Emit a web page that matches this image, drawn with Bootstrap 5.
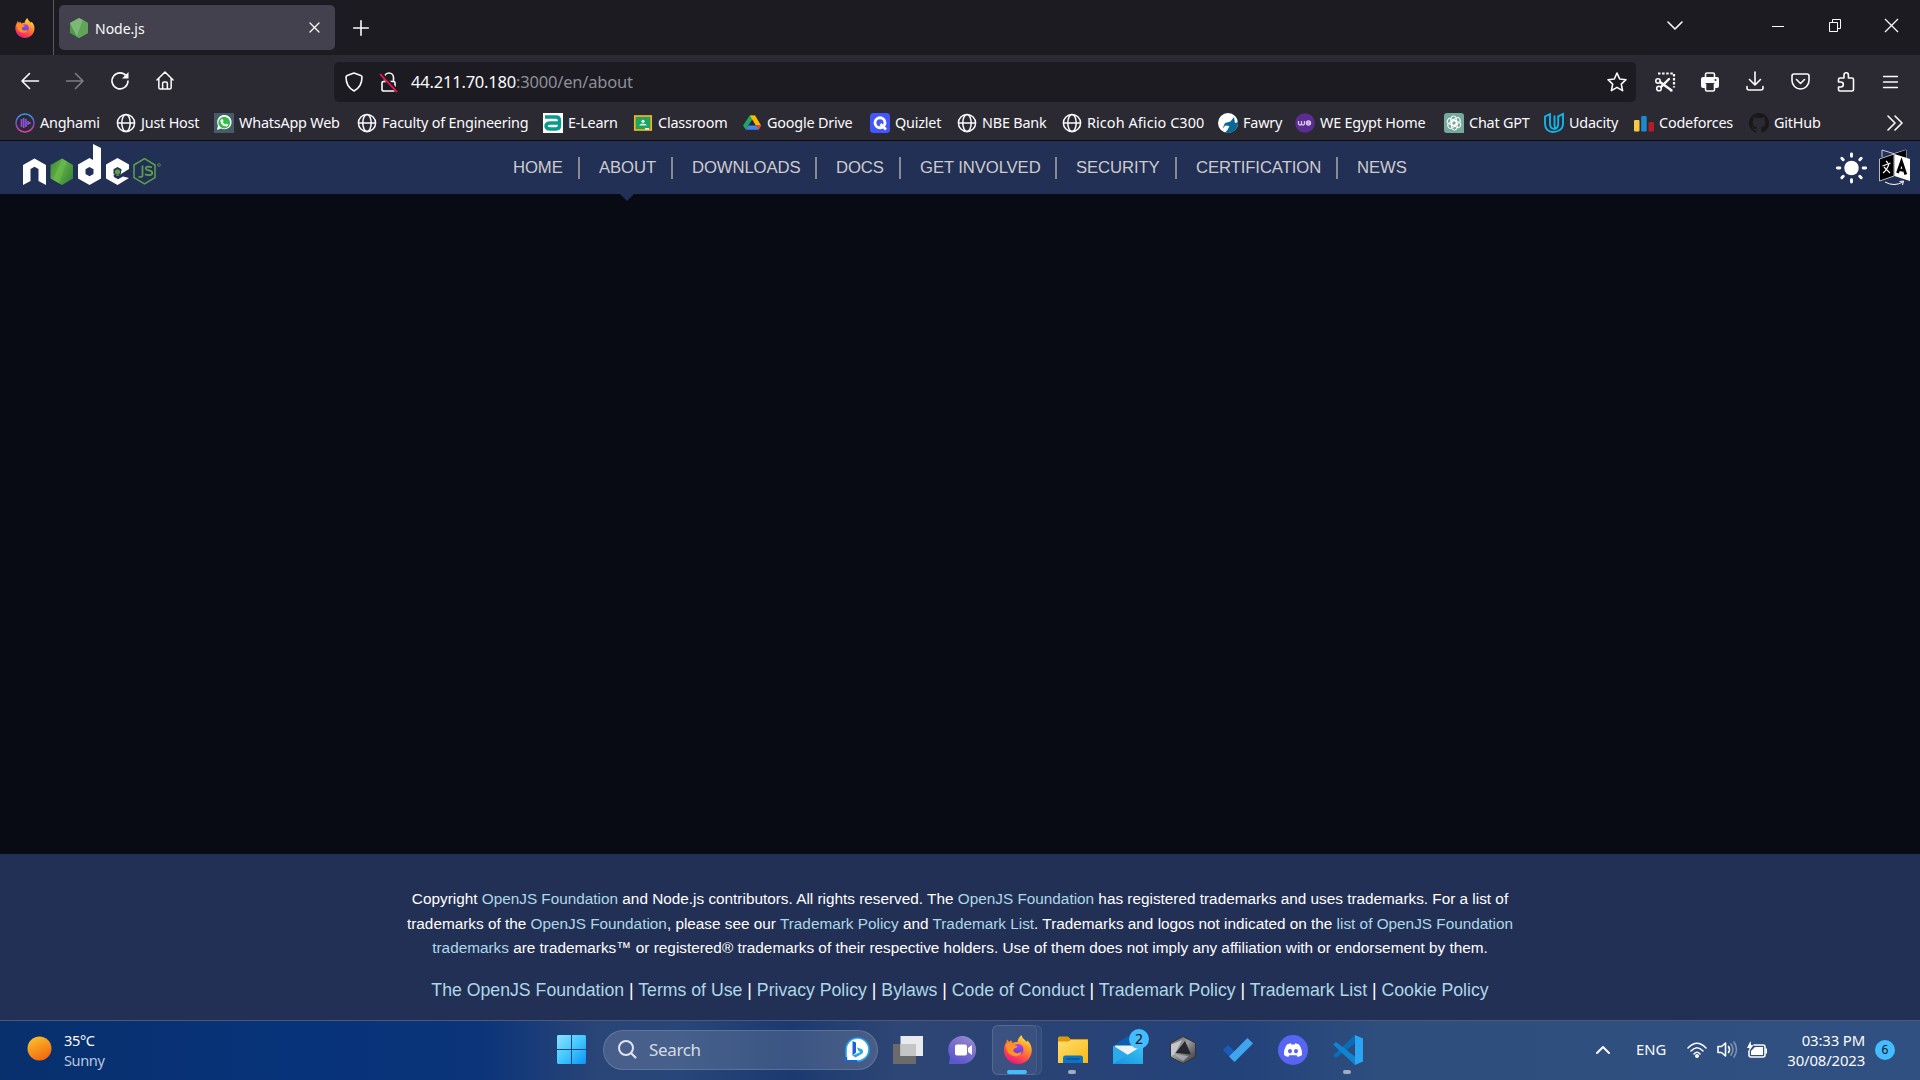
<!DOCTYPE html>
<html lang="en">
<head>
<meta charset="utf-8">
<title>Node.js</title>
<link rel="stylesheet" href="https://cdn.jsdelivr.net/npm/bootstrap@5.3.0/dist/css/bootstrap.min.css">
<script src="https://cdn.jsdelivr.net/npm/bootstrap@5.3.0/dist/js/bootstrap.bundle.min.js"></script>
<style>
body{width:1920px;height:1080px;overflow:hidden;background:#080b14;font-family:"Noto Sans",sans-serif;color:#fbfbfe;font-size:14px}
svg{display:block;flex:none;overflow:visible}
.ln{fill:none;stroke:#fbfbfe;stroke-width:1.6;stroke-linecap:round;stroke-linejoin:round}
.thin{stroke-width:1.3}
.thick{stroke-width:2}
.tabstrip{height:55px;background:#1c1b22}
.ffview{width:54px;height:55px;border-right:1px solid #5a5963;padding-left:15px}
.tab-card{width:276px;height:45px;margin-left:5px;background:#42414d;border-radius:5px;padding:0 15px 0 11px}
.tab-title{margin-left:7px;padding-top:1px}
.newtab{margin-left:18px}
.win-min{margin-left:65px}
.win-restore{margin-left:45px}
.win-close{margin-left:44px;margin-right:-2px}
.tools{height:55px;background:#2b2a33;padding-bottom:1px}
.nav-icons{width:334px;padding:0 0 3px 21px;gap:27px}
.urlbar{width:1302px;height:40px;background:#1c1b22;border-radius:5px;font-size:16.5px;padding:0 9px 0 11px}
.urlbar .lockicon{margin-left:17px}
.urlbar .addr{letter-spacing:-.2px;margin-left:13px;white-space:nowrap}
.tool-icons{gap:27px;margin-left:19px;padding-bottom:1px}
.tool-icons svg:nth-child(2){margin-left:-1px}
.dim{color:#8f8f9a}
.bookmarks{height:31px;background:#2b2a33;border-bottom:1px solid #0c0c0d;padding:0 17px 4px 15px;font-size:14.4px;letter-spacing:-.2px}
.bm{gap:5px;white-space:nowrap;height:26px}
.w77{width:77px}.w87{width:87px}.w90{width:90px}.w98{width:98px}.w100{width:100px}.w101{width:101px}.w105{width:105px}.w110{width:110px}.w115{width:115px}.w127{width:127px}.w143{width:143px}.w149{width:149px}.w156{width:156px}.w186{width:186px}
.wider{letter-spacing:.1px}
.sitenav{height:53px;background:#233056;font:16.7px "Liberation Sans",Arial,sans-serif;color:#ccc;padding:0 10px 0 22px}
.sitelogo{margin-top:-6px}
.langicon{margin-left:11px}
.sitenav .menu{margin-left:353px;letter-spacing:-.1px}
.sitenav .menu>span{white-space:nowrap;height:22px;line-height:22px}
.sitenav .menu>span:not(:last-child){border-right:2px solid #8a8b92}
.n1{width:67px}.n2{width:93px}.n3{width:144px}.n4{width:84px}.n5{width:156px}.n6{width:120px}.n7{width:161px}
.menu>span+span{padding-left:19px}
.active-item{position:relative}
.active-item::after{content:"";position:absolute;left:40px;top:37px;border:7px solid transparent;border-top-color:#233056;border-bottom:0}
.page{height:660px}
.site-footer{height:166px;background:#233056;font-family:"Liberation Sans",Arial,sans-serif;color:#fff;padding-top:33px}
.site-footer a{color:#add8e6;text-decoration:none}
.legal{font-size:15.34px;line-height:24.5px;white-space:nowrap}
.flinks{font-size:17.7px;line-height:26px;margin-top:16px;white-space:nowrap}
.taskbar{height:60px;padding-bottom:2px;border-top:1px solid #4b5a77;background:linear-gradient(90deg,#08306d 0,#07337a 300px,#0b347a 480px,#2a4577 600px,#284679 680px,#1c3a70 790px,#2e4675 900px,#2b4374 1010px,#23427a 1240px,#2e4e7e 1380px,#2f5080 1920px)}
.weather{width:530px;padding-left:27px;line-height:20px;font-size:14.6px;letter-spacing:-.4px}
.weather svg{margin-bottom:2px}
.weather .wx{margin-left:12px}
.weather .cond{color:#b9c6dd}
.startcell{width:73px;padding-left:27px}
.searchpill{width:275px;height:40px;border-radius:20px;background:rgba(255,255,255,.14);border:1px solid rgba(255,255,255,.14);font-size:17px;color:#d5dae6;padding:0 7px 0 14px}
.searchpill span{margin-left:12px;letter-spacing:-.35px}
.apps{margin-left:2px}
.app{width:55px;height:59px;position:relative}
.app .dot{position:absolute;bottom:5px;left:23px;width:8px;height:4px;border-radius:2px;background:#a3adc0}
.app .dot.on{width:20px;left:17px;background:#43bdff}
.app.sel::before{content:"";position:absolute;left:2px;top:5px;width:50px;height:50px;border-radius:6px;background:rgba(255,255,255,.05);border:1px solid rgba(255,255,255,.07)}
.app.sel::after{content:"";position:absolute;left:2px;top:5px;width:45px;height:50px;border-radius:6px;background:rgba(255,255,255,.03);border:1px solid rgba(255,255,255,.07)}
.app.sel .dot{z-index:1}
.app.sel svg{position:relative;z-index:1}
.cnt{position:absolute;left:29px;top:9px;width:20px;height:20px;border-radius:50%;background:#43bdff;color:#111;font-size:14px;line-height:20px;text-align:center}
.lang{margin-left:26px;width:51px;font-size:14.8px}
.tray-next{margin-left:10px}
.clock{line-height:20px;font-size:14.9px;letter-spacing:-.15px;width:98px}
.note-n{width:20px;height:20px;border-radius:50%;background:#43bdff;color:#111;font-size:12px;line-height:20px;text-align:center;margin:0 1px 0 10px}
</style>
</head>
<body>
<svg width="0" height="0" class="position-absolute">
<defs>
<linearGradient id="ffo" x1=".8" y1="0" x2=".3" y2="1"><stop offset="0" stop-color="#fff44f"/><stop offset=".35" stop-color="#ff9a2a"/><stop offset=".7" stop-color="#ff4a4a"/><stop offset="1" stop-color="#e31587"/></linearGradient>
<linearGradient id="ffp" x1="0" y1="0" x2="0" y2="1"><stop offset="0" stop-color="#b045e8"/><stop offset="1" stop-color="#5b3fd0"/></linearGradient>
<linearGradient id="win" x1="0" y1="0" x2="1" y2="1"><stop offset="0" stop-color="#8be2ff"/><stop offset=".5" stop-color="#43c7fd"/><stop offset="1" stop-color="#0c93f8"/></linearGradient>
<linearGradient id="grn" x1="0" y1="0" x2="1" y2=".6"><stop offset="0" stop-color="#3e863d"/><stop offset=".5" stop-color="#5fb044"/><stop offset="1" stop-color="#3c8a3c"/></linearGradient>
<linearGradient id="sun" x1=".2" y1="0" x2=".7" y2="1"><stop offset="0" stop-color="#f9c22e"/><stop offset="1" stop-color="#f2640c"/></linearGradient>
<linearGradient id="ang" x1="0" y1="0" x2="0" y2="1"><stop offset="0" stop-color="#2aa3e8"/><stop offset=".5" stop-color="#7a4fd0"/><stop offset="1" stop-color="#e23d9c"/></linearGradient>
<linearGradient id="chat" x1="1" y1="0" x2=".4" y2="1"><stop offset="0" stop-color="#7aa7f0"/><stop offset=".3" stop-color="#8c7bc9"/><stop offset="1" stop-color="#5a57cf"/></linearGradient>
<linearGradient id="fold" x1="0" y1="0" x2="1" y2="1"><stop offset="0" stop-color="#ffdf70"/><stop offset="1" stop-color="#f9b810"/></linearGradient>
<linearGradient id="mail" x1="1" y1="0" x2="0" y2="1"><stop offset="0" stop-color="#36c5f4"/><stop offset="1" stop-color="#1a8fe0"/></linearGradient>
<linearGradient id="hexg" x1="0" y1="0" x2="1" y2="1"><stop offset="0" stop-color="#55585c"/><stop offset=".45" stop-color="#9a9da2"/><stop offset="1" stop-color="#2c2d30"/></linearGradient>
<symbol id="firefox" viewBox="0 0 28 29"><path fill="url(#ffo)" d="M17.500 0c.5 3.500 3.500 4.500 5 7l1-1.500c3 3 4.300 6.500 4.300 9.500 0 8-6 14-13.800 14S0 23 0 15c0-3.500 1-6 2.500-8L3 4.500 5.500 7 7 5l1.500 3c2-1.200 3.500-1.200 5-1C13.500 4.500 15.500 1.500 17.500 0z"/><circle cx="14" cy="14.500" r="5.500" fill="url(#ffp)"/><path fill="#ff9328" d="M2 10c2-3 6-2.500 7.500 0l4 1c0 1.800-2.500 1.800-3.500 2.800s-1 2.700 1 3.700c2 1.500 4.500.5 6.500-1 0 4-4 5.500-7.500 4.500-5-1-8-5-8-11z"/></symbol>
<symbol id="globe" viewBox="0 0 20 20"><g fill="none" stroke="#fbfbfe" stroke-width="1.5"><circle cx="10" cy="10" r="8.600"/><ellipse cx="10" cy="10" rx="4.200" ry="8.600"/><path d="M1.500 10h17"/></g></symbol>
</defs></svg>

<header>
<div class="tabstrip d-flex align-items-center">
  <div class="ffview d-flex align-items-center"><svg width="20" height="20"><use href="#firefox"/></svg></div>
  <div class="tab-card d-flex align-items-center">
    <svg width="18" height="20" viewBox="0 0 18 20"><path fill="#4f9a4a" d="M9 0l9 5v10l-9 5-9-5V5z"/><path fill="#7fb779" d="M9 0l4 2-6 17-7-14z"/><path fill="#5fa65a" d="M13 2l5 3v10l-9 5-2-1z"/></svg>
    <span class="tab-title">Node.js</span>
    <svg class="ms-auto" width="11" height="11" viewBox="0 0 11 11"><path class="ln thin" d="M1 1l9 9M10 1l-9 9"/></svg>
  </div>
  <svg class="newtab" width="16" height="16" viewBox="0 0 16 16"><path class="ln" d="M8 .7v14.600M.7 8h14.600"/></svg>
  <div class="d-flex align-items-center ms-auto pe-4 pb-1">
    <svg width="16" height="9" viewBox="0 0 16 9" class="me-4"><path class="ln" d="M1 1l7 7 7-7"/></svg>
    <svg class="win-min" width="12" height="12" viewBox="0 0 12 12"><path stroke="#fff" d="M0 6.500h12"/></svg>
    <svg class="win-restore" width="12" height="13" viewBox="0 0 12 13"><path fill="none" stroke="#fff" d="M.5 3.500h8v9h-8zM3.500 3.500v-3h8v9h-3"/></svg>
    <svg class="win-close" width="13" height="13" viewBox="0 0 13 13"><path stroke="#fff" stroke-width="1.200" d="M0 0l13 13M13 0L0 13"/></svg>
  </div>
</div>
<div class="tools d-flex align-items-center">
  <div class="nav-icons d-flex align-items-center">
    <svg width="18" height="18" viewBox="0 0 18 18"><path class="ln" d="M17.500 9H1M8.500 1.500L1 9l7.500 7.500"/></svg>
    <svg width="18" height="18" viewBox="0 0 18 18" opacity=".4"><path class="ln" d="M.5 9H17M9.500 1.500L17 9l-7.500 7.500"/></svg>
    <svg width="18" height="18" viewBox="0 0 18 18"><path class="ln" d="M15.500 4.200A8 8 0 1 0 17 9"/><path fill="#fbfbfe" d="M17.500 0v6.500H11z"/></svg>
    <svg width="18" height="19" viewBox="0 0 19 20"><path class="ln" d="M1 9.500L9.500 1 18 9.500M3 8v9.500q0 1.500 1.500 1.500h10q1.500 0 1.500-1.500V8M7 19v-6q0-1.500 1.500-1.500h2q1.500 0 1.500 1.500v6"/></svg>
  </div>
  <div class="urlbar d-flex align-items-center">
    <svg width="18" height="20" viewBox="0 0 18 20"><path class="ln" d="M9 1l6.800 2.400q1.200.5 1.200 1.700C17 11 15 16 9 19 3 16 1 11 1 5.100q0-1.200 1.200-1.700z"/></svg>
    <svg class="lockicon" width="18" height="20" viewBox="0 0 18 20"><path class="ln" d="M4.500 9V5.500a4.500 4.500 0 0 1 9 0V9M4 9.500h9.500q1.500 0 1.500 1.500v6.500q0 1.500-1.500 1.500h-9.500q-2 0-2-1.500V11q0-1.500 2-1.500z"/><path stroke="#1c1b22" stroke-width="4" d="M1 2l16 17"/><path stroke="#ff1450" stroke-width="1.800" d="M0 2l17 18"/></svg>
    <span class="addr">44.211.70.180<span class="dim">:3000/en/about</span></span>
    <svg class="ms-auto" width="20" height="20" viewBox="0 0 20 20"><path class="ln" d="M10 1l2.700 6 6.300.7-4.700 4.400 1.300 6.500L10 15.400l-5.600 3.200 1.300-6.500L1 7.700 7.300 7z"/></svg>
  </div>
  <div class="tool-icons d-flex align-items-center">
    <svg width="20" height="20" viewBox="0 0 20 20"><g class="ln"><path stroke-dasharray="2.500 1.600" stroke-linecap="butt" stroke-width="2.200" d="M3 1.500h16v14M15 18.500h4"/><circle cx="3" cy="9" r="2.200"/><circle cx="4" cy="16.500" r="2.300"/><path d="M5 10l11 8M6 15l8-8" stroke-width="2.400"/></g></svg>
    <svg width="18" height="20" viewBox="0 0 18 20"><path class="ln" d="M4.500 5V2.500Q4.500 1 6 1h6q1.500 0 1.500 1.500V5M4.500 12v5.500Q4.500 19 6 19h6q1.500 0 1.500-1.500V12"/><path fill="#fbfbfe" d="M2 5h14q2 0 2 2v7q0 2-2 2h-2v-5H4v5H2q-2 0-2-2V7q0-2 2-2z"/><circle cx="14.500" cy="8" r="1" fill="#2b2a33"/></svg>
    <svg width="18" height="19" viewBox="0 0 18 19"><path class="ln" d="M9 0v12.500M3.500 7.500L9 13l5.500-5.500M1 14.500v1.500q0 2 2 2h12q2 0 2-2v-1.500"/></svg>
    <svg width="19" height="17" viewBox="0 0 19 17"><path class="ln" d="M3 1h13q2 0 2 2v4.500a8.500 8.500 0 0 1-17 0V3q0-2 2-2zM5.500 6.500l4 4 4-4"/></svg>
    <svg width="19" height="20" viewBox="0 0 19 20"><path class="ln" d="M1.500 10V7.500Q1.500 6 3 6h4V3a2.200 2.200 0 0 1 4.400 0v3H15q1.500 0 1.500 1.500v10q0 1.500-1.500 1.500H3q-1.500 0-1.500-1.500v-2.500h2.300a2.400 2.400 0 0 0 0-5H1.500z"/></svg>
    <svg width="16" height="14" viewBox="0 0 16 14"><path class="ln thin" d="M.5 1.500h14M.5 7h14M.5 12.500h14"/></svg>
  </div>
</div>
<nav class="bookmarks d-flex align-items-center">
  <div class="bm w101 d-flex align-items-center"><svg width="20" height="20" viewBox="0 0 20 20"><circle cx="10" cy="10" r="9" fill="none" stroke="url(#ang)" stroke-width="1.500"/><path d="M6.500 6v8M8.700 5v10M10.900 6v8M13 8v4M14.800 9v2" stroke="#8d4fd6" stroke-width="1.700"/></svg>Anghami</div>
  <div class="bm w98 d-flex align-items-center"><svg width="20" height="20"><use href="#globe"/></svg>Just Host</div>
  <div class="bm w143 d-flex align-items-center"><svg width="20" height="20" viewBox="0 0 20 20"><path fill="#475c6b" d="M0 0h20v20H0z"/><path fill="#fff" d="M3 17l1-4.500a7.200 7.200 0 1 1 3 3z"/><circle cx="10.200" cy="9.600" r="5.900" fill="#35bd4a"/><path fill="#fff" d="M7.500 6.200l1.300.1.800 2-.7 1q1 1.600 2.500 2.200l.9-1 2 1q0 1.700-2 2-5-.5-6-5.500 0-1.300 1.200-1.800z"/></svg>WhatsApp Web</div>
  <div class="bm w186 d-flex align-items-center"><svg width="20" height="20"><use href="#globe"/></svg>Faculty of Engineering</div>
  <div class="bm w90 d-flex align-items-center"><svg width="20" height="20" viewBox="0 0 20 20"><path fill="#fff" d="M0 0h20v20H0z"/><path fill="none" stroke="#0a9a8c" stroke-width="3.400" d="M2 4h11q3.500 0 3.500 3.500v5q0 3.500-3.500 3.500H7.500q-4.500 0-4.500-3t4.500-3H16"/></svg>E-Learn</div>
  <div class="bm w110 d-flex align-items-center"><svg width="20" height="20" viewBox="0 0 20 20"><rect x="1.800" y="3" width="16.400" height="14" fill="#1fa463" stroke="#f0b41c" stroke-width="1.700"/><circle cx="10" cy="8.200" r="1.500" fill="#fff"/><path fill="#d8f0e0" d="M6 12.500q1-2 4-2t4 2z"/><path fill="#fff" d="M12 15h4v1.500h-4z"/></svg>Classroom</div>
  <div class="bm w127 d-flex align-items-center"><svg width="19" height="20" viewBox="0 0 20 20"><path fill="#1fa463" d="M7 2h5.800L5.500 12.500 3 17 0 12.500z"/><path fill="#2b2a33" d="M10 7l-3.200 5.500h6.400z"/><path fill="#ffba00" d="M7.300 2h5.500L19 12.500h-5.500z"/><path fill="#4285f4" d="M5.500 12.500H19L16.500 17H3z"/><path fill="#ea4335" d="M13.500 12.500H19L16.500 17z"/></svg>Google Drive</div>
  <div class="bm w87 d-flex align-items-center"><svg width="20" height="20" viewBox="0 0 20 20"><rect width="20" height="20" rx="3.500" fill="#4255ff"/><circle cx="10" cy="9.800" r="5" fill="none" stroke="#fff" stroke-width="2.900"/><path stroke="#fff" stroke-width="2.600" d="M10.500 11l5.500 5.500"/></svg>Quizlet</div>
  <div class="bm w105 d-flex align-items-center"><svg width="20" height="20"><use href="#globe"/></svg>NBE Bank</div>
  <div class="bm w156 wider d-flex align-items-center"><svg width="20" height="20"><use href="#globe"/></svg>Ricoh Aficio C300</div>
  <div class="bm w77 d-flex align-items-center"><svg width="20" height="20" viewBox="0 0 20 20"><circle cx="10" cy="10" r="10" fill="#fff"/><path fill="#0b6796" d="M20 9a10 10 0 0 1-13 10.500q3-2.500 4.500-6.500l-4-.5-3 3 2.500-5.500 5.500-1.500L16 4l1 6z"/></svg>Fawry</div>
  <div class="bm w149 d-flex align-items-center"><svg width="20" height="20" viewBox="0 0 20 20"><circle cx="10" cy="10" r="9.800" fill="#5c2d91"/><path fill="none" stroke="#dcc8ef" stroke-width="1.300" d="M3.500 8v2.500q0 1.500 1.500 1.500t1.500-1.500V8v2.500q0 1.500 1.500 1.500t1.500-1.500V8M15.500 10h-4q0-2 2-2t2 2q0 2-2 2t-2-2"/></svg>WE Egypt Home</div>
  <div class="bm w100 d-flex align-items-center"><svg width="20" height="20" viewBox="0 0 20 20"><path fill="#74aa9c" d="M3 0h14q3 0 3 3v17H3q-3 0-3-3V3q0-3 3-3z"/><g fill="none" stroke="#fff" stroke-width="1"><rect id="pet" x="6.800" y="3" width="5.500" height="9.500" rx="2.700"/><use href="#pet" transform="rotate(60 10 10)"/><use href="#pet" transform="rotate(120 10 10)"/><use href="#pet" transform="rotate(180 10 10)"/><use href="#pet" transform="rotate(240 10 10)"/><use href="#pet" transform="rotate(300 10 10)"/></g></svg>Chat GPT</div>
  <div class="bm w90 d-flex align-items-center"><svg width="20" height="20" viewBox="0 0 20 20"><path fill="none" stroke="#12b5ea" stroke-width="1.900" d="M6 1.200L1 3.500V11c.3 5 3.500 7.700 7.500 8 5.500 0 10.300-2.500 10.500-8V1l-4.800 2.300V11c0 3.500-1.800 4.700-3.800 5-2.500-.3-4.400-1.500-4.400-5zM14.200 3.300"/><path fill="none" stroke="#12b5ea" stroke-width="1.900" d="M10.500 2.500V12q0 2.500 1.500 3.800"/></svg>Udacity</div>
  <div class="bm w115 d-flex align-items-center"><svg width="20" height="20" viewBox="0 0 20 20"><rect x="0" y="7" width="5.500" height="11.500" rx="1" fill="#f6c945"/><rect x="7.200" y="3" width="5.500" height="15.500" rx="1" fill="#1c8ad0"/><rect x="14.500" y="9" width="5.500" height="9.500" rx="1" fill="#b51d26"/></svg>Codeforces</div>
  <div class="bm d-flex align-items-center"><svg width="20" height="20" viewBox="0 0 16 16"><path fill="#191717" d="M8 0C3.580 0 0 3.580 0 8c0 3.540 2.290 6.530 5.470 7.590.4.070.55-.17.55-.38 0-.19-.01-.82-.01-1.490-2.010.37-2.530-.49-2.690-.94-.09-.23-.48-.94-.82-1.130-.28-.15-.68-.52-.01-.53.63-.01 1.080.58 1.230.82.72 1.210 1.870.87 2.330.66.070-.52.28-.87.51-1.070-1.780-.2-3.640-.89-3.640-3.950 0-.87.31-1.590.82-2.150-.08-.2-.36-1.020.08-2.120 0 0 .67-.21 2.200.82a7.600 7.600 0 0 1 4 0c1.530-1.040 2.200-.82 2.200-.82.44 1.100.16 1.920.08 2.120.51.56.82 1.270.82 2.150 0 3.070-1.870 3.750-3.650 3.950.29.25.54.73.54 1.480 0 1.070-.01 1.930-.01 2.200 0 .21.15.46.55.38A8 8 0 0 0 16 8c0-4.420-3.580-8-8-8z"/></svg>GitHub</div>
  <svg class="ms-auto" width="16" height="16" viewBox="0 0 16 16"><path class="ln" d="M1 1l7 7-7 7M8 1l7 7-7 7"/></svg>
</nav>
</header>

<nav class="sitenav d-flex align-items-center">
  <svg class="sitelogo" width="138" height="42" viewBox="0 0 138 42">
    <path fill="#fff" d="M1 21l11.500-6.500L24 21v20l-7.500-4V25l-4-2.300-4 2.300v12L1 41z"/>
    <path fill="url(#grn)" d="M40 14.500L51 21v13.500L40 41l-11.500-6.500V21z"/><path fill="#76c552" opacity=".4" d="M40 14.500l5 3-8 22-6-4z"/>
    <path fill="#fff" fill-rule="evenodd" d="M71 0l8 4v30.500L67.500 41 56 34.500v-14L67.500 14l3.500 2zM67.500 23l-4 2.200v4.800l4 2.200 4-2.200v-4.800z"/>
    <path fill="#fff" fill-rule="evenodd" d="M95.500 14L107 20.500v4.500l-11.200 7-4.300-2.200v-4.600l4-2.200 4 2.200v1.800l-8 4 .5 2 4 2.200 5-2.800 6 1.500L95.500 41 84 34.500v-14z"/><circle cx="95.500" cy="28" r="3.200" fill="#5aa445" stroke="#233056"/>
    <path fill="none" stroke="#5fa04e" stroke-width="1.500" d="M122.500 14.700l10.500 6.300v12.700l-10.500 6.300-10.500-6.300V21z"/>
    <path fill="none" stroke="#5fa04e" stroke-width="1.700" d="M120.500 21.500v10q0 2.500-4 1M130 23.200q-6-1.600-6.300.8c0 3.500 6.600 1.200 6.600 5 0 2.600-4.500 2.600-7.300 1.300"/>
    <circle cx="137" cy="21" r="1.400" fill="none" stroke="#5fa04e" stroke-width=".7"/>
  </svg>
  <div class="menu d-flex"><span class="n1">HOME</span><span class="n2 active-item">ABOUT</span><span class="n3">DOWNLOADS</span><span class="n4">DOCS</span><span class="n5">GET INVOLVED</span><span class="n6">SECURITY</span><span class="n7">CERTIFICATION</span><span>NEWS</span></div>
  <svg class="ms-auto" width="33" height="34" viewBox="0 0 34 34"><circle cx="17" cy="17" r="7.500" fill="#fff"/><path stroke="#fff" stroke-width="3" stroke-linecap="round" d="M17 2.500v2.500M17 29v2.500M2.500 17H5M29 17h2.500M7 7l1.500 1.500M25.500 25.500L27 27M27 7l-1.500 1.500M8.500 25.500L7 27"/></svg>
  <svg class="langicon" width="31" height="37" viewBox="0 0 31 37"><path fill="none" stroke="#ccd" d="M3 8V1l13 4M14 5l13-4v8"/><path fill="#000" d="M15 5l12-4v8l-12-3z"/><path fill="#000" stroke="#fff" stroke-width=".7" d="M.5 10L15 5v22L.5 32z"/><path fill="#fff" d="M15.500 5L31 10v22l-15.500-5z"/><path fill="none" stroke="#000" stroke-width="2.800" d="M18.500 24L22.500 12.500l4.300 13M19.500 20.500l6 1.200"/><path fill="none" stroke="#fff" stroke-width="1.100" d="M7 12l2 2M3.500 17l8-3M10 15q-2 6-6 9M5 18l6 6"/><path fill="none" stroke="#fff" d="M6 33q9 5 18 0M20.500 32.500l4-.5-1 4"/></svg>
</nav>

<main class="page"></main>

<footer class="site-footer text-center">
  <div class="legal">Copyright <a href="#">OpenJS Foundation</a> and Node.js contributors. All rights reserved. The <a href="#">OpenJS Foundation</a> has registered trademarks and uses trademarks. For a list of<br>trademarks of the <a href="#">OpenJS Foundation</a>, please see our <a href="#">Trademark Policy</a> and <a href="#">Trademark List</a>. Trademarks and logos not indicated on the <a href="#">list of OpenJS Foundation</a><br><a href="#">trademarks</a> are trademarks™ or registered® trademarks of their respective holders. Use of them does not imply any affiliation with or endorsement by them.</div>
  <div class="flinks"><a href="#">The OpenJS Foundation</a> | <a href="#">Terms of Use</a> | <a href="#">Privacy Policy</a> | <a href="#">Bylaws</a> | <a href="#">Code of Conduct</a> | <a href="#">Trademark Policy</a> | <a href="#">Trademark List</a> | <a href="#">Cookie Policy</a></div>
</footer>

<div class="taskbar d-flex align-items-center">
  <div class="weather d-flex align-items-center"><svg width="25" height="25" viewBox="0 0 25 25"><circle cx="12.500" cy="12.500" r="12" fill="url(#sun)"/></svg><div class="wx">35°C<br><span class="cond">Sunny</span></div></div>
  <div class="startcell"><svg width="29" height="29" viewBox="0 0 29 29"><path fill="url(#win)" d="M1 0h13v14H0V1zM15 0h13l1 1v13H15zM0 15h14v14H1l-1-1zM15 15h14v13l-1 1H15z"/></svg></div>
  <div class="searchpill d-flex align-items-center"><svg width="19" height="19" viewBox="0 0 19 19"><circle cx="8" cy="8" r="7" fill="none" stroke="#dfe4ee" stroke-width="2"/><path stroke="#dfe4ee" stroke-width="2.200" stroke-linecap="round" d="M13 13l4.500 4.500"/></svg><span>Search</span>
    <svg class="ms-auto" width="25" height="25" viewBox="0 0 25 25"><path fill="#fff" stroke="#1fa5ee" stroke-width="1.600" d="M1 24V12.500a11.500 11.500 0 1 1 11.500 11.500z"/><path fill="none" stroke="#1466cf" stroke-width="2" d="M1.200 20v4h11"/><path fill="#1b61dc" d="M7.500 4l3.500 1.500v10l-3.500 3z"/><path fill="#2aa7e8" d="M7.500 18.500l3 2 7-4q1.500-3-1-4.500l-4.500-1.500 1.500 3.500 2 1z"/></svg></div>
  <div class="apps d-flex">
    <div class="app d-flex align-items-center justify-content-center"><svg width="30" height="28" viewBox="0 0 30 28"><path fill="#6b6b6b" d="M0 8h23v20H0z"/><path fill="#e9eaec" d="M7.500 0H30v20H7.500z"/><path fill="#c4c5c7" d="M7.500 8H23v12H7.500z"/></svg></div>
    <div class="app d-flex align-items-center justify-content-center"><svg width="28" height="28" viewBox="0 0 28 28"><path fill="url(#chat)" d="M0 28l1-7a14 14 0 1 1 13 7z"/><rect x="6" y="8.500" width="12" height="11" rx="2" fill="#fff"/><path fill="#fff" d="M19 12l4-3v10l-4-3z"/></svg></div>
    <div class="app sel d-flex align-items-center justify-content-center"><svg width="28" height="29"><use href="#firefox"/></svg><i class="dot on"></i></div>
    <div class="app d-flex align-items-center justify-content-center"><svg width="30" height="27" viewBox="0 0 30 27"><path fill="#dc9a08" d="M0 2q0-1.500 1.500-1.500H10l2.500 2.500H30v5H0z"/><path fill="url(#fold)" d="M0 5.500h10.500L13 4h16q1 0 1 1v22H0z"/><path fill="#0d73c4" d="M5 27v-5q0-2.500 2.500-2.500h15Q25 19.500 25 22v5z"/><path stroke="#074e8c" stroke-width="1.200" d="M8.500 23h13"/></svg><i class="dot"></i></div>
    <div class="app d-flex align-items-center justify-content-center"><svg width="30" height="28" viewBox="0 0 30 28"><path fill="#0a5fb5" d="M0 10L15 0l15 10v4H0z"/><path fill="#eef0f2" d="M2 9.500h26v6L15 20 2 12z"/><path fill="#2ca9ea" d="M0 9.500L15 19 30 9.500V28H0z"/><path fill="url(#mail)" d="M30 9.500V28H0z"/></svg><span class="cnt">2</span></div>
    <div class="app d-flex align-items-center justify-content-center"><svg width="26" height="28" viewBox="0 0 26 28"><path fill="url(#hexg)" stroke="#333" d="M13 .5L25.500 7v14L13 27.500.5 21V7z"/><path fill="#c3c6ca" d="M12 4L4.500 18.500 1 20V8.500z"/><path fill="#26282b" d="M15 5l6 13.500L5.500 17z"/><path fill="#b5b8bc" d="M4.500 18.500l14 1.500L13 25z" opacity=".7"/></svg></div>
    <div class="app d-flex align-items-center justify-content-center"><svg width="30" height="24" viewBox="0 0 30 24"><path fill="#185abd" d="M0 12l5-5 9 9-4 6z"/><path fill="#41a5ee" d="M6 18.500L24.500 0 30 5.500 11.500 24z"/></svg></div>
    <div class="app d-flex align-items-center justify-content-center"><svg width="30" height="30" viewBox="0 0 30 30"><circle cx="15" cy="15" r="15" fill="#5865f2"/><path fill="#fff" fill-rule="evenodd" d="M9 9.500q2-1 3.800-1.200l.6 1.200h3.200l.6-1.200Q19 8.500 21 9.500q3.500 5 3 10.500-2 1.500-4.300 2l-1-1.800h-7.400l-1 1.800Q8 21.500 6 20q-.5-5.500 3-10.500zM12 14a2 2.200 0 1 0 .01 0zm6 0a2 2.200 0 1 0 .01 0z"/></svg></div>
    <div class="app d-flex align-items-center justify-content-center"><svg width="30" height="30" viewBox="0 0 30 30"><path fill="#0a6db5" d="M0 20.500l3 2.500L22 8.500V0z"/><path fill="#1084d0" d="M0 9.500l3-2.500 19 14.500V30z"/><path fill="#2aa5f3" d="M22 0l8 3.500v23L22 30z"/></svg><i class="dot"></i></div>
  </div>
  <div class="d-flex align-items-center ms-auto pe-4">
    <svg width="14" height="9" viewBox="0 0 14 9"><path class="ln thick" d="M1 8l6-6 6 6"/></svg>
    <span class="lang">ENG</span>
    <svg width="20" height="16" viewBox="0 0 20 16"><path class="ln" d="M1 6q9-9.500 18 0M4 9q6-6.500 12 0M7 12q3-3.500 6 0"/><circle cx="10" cy="14" r="2" fill="#fff"/></svg>
    <svg class="tray-next" width="20" height="17" viewBox="0 0 20 17"><path class="ln" d="M1 5.500h3.500L8.500 2v13L4.500 11.500H1zM11.500 5.500q2 3 0 6"/><path class="ln" opacity=".4" d="M14 3q4 5.500 0 11M17 1q5 7.500 0 15"/></svg>
    <svg class="tray-next" width="20" height="17" viewBox="0 0 20 17"><path class="ln" d="M7 4h9q2 0 2 2v8q0 2-2 2H4q-2 0-2-2v-4"/><path fill="#fff" d="M8 6h8v8H4v-4zM18.500 7.500H20v5h-1.500zM3.500 0L0 7h2.500L1.500 11 6.500 4H4z"/></svg>
    <div class="clock text-end">03:33 PM<br>30/08/2023</div>
    <span class="note-n">6</span>
  </div>
</div>
</body>
</html>
